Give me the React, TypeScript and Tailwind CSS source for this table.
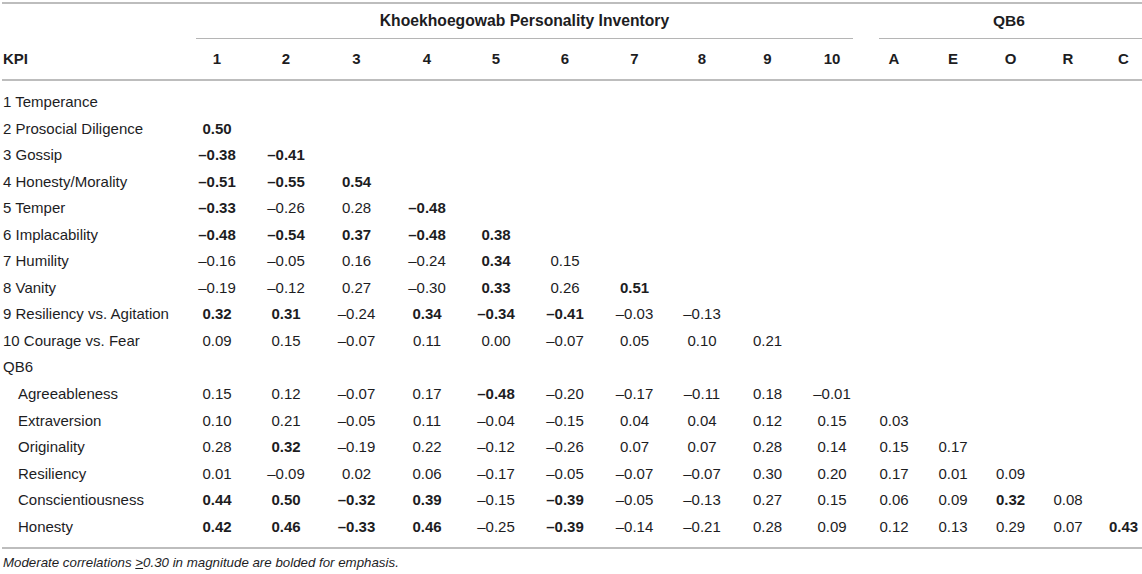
import React from "react";

// "*" prefix = bolded correlation
const rows: { label: string; sub?: boolean; values: string[] }[] = [
  { label: "1 Temperance", values: [] },
  { label: "2 Prosocial Diligence", values: ["*0.50"] },
  { label: "3 Gossip", values: ["*–0.38", "*–0.41"] },
  { label: "4 Honesty/Morality", values: ["*–0.51", "*–0.55", "*0.54"] },
  { label: "5 Temper", values: ["*–0.33", "–0.26", "0.28", "*–0.48"] },
  { label: "6 Implacability", values: ["*–0.48", "*–0.54", "*0.37", "*–0.48", "*0.38"] },
  { label: "7 Humility", values: ["–0.16", "–0.05", "0.16", "–0.24", "*0.34", "0.15"] },
  { label: "8 Vanity", values: ["–0.19", "–0.12", "0.27", "–0.30", "*0.33", "0.26", "*0.51"] },
  {
    label: "9 Resiliency vs. Agitation",
    values: ["*0.32", "*0.31", "–0.24", "*0.34", "*–0.34", "*–0.41", "–0.03", "–0.13"],
  },
  {
    label: "10 Courage vs. Fear",
    values: ["0.09", "0.15", "–0.07", "0.11", "0.00", "–0.07", "0.05", "0.10", "0.21"],
  },
  { label: "QB6", values: [] },
  {
    label: "Agreeableness",
    sub: true,
    values: ["0.15", "0.12", "–0.07", "0.17", "*–0.48", "–0.20", "–0.17", "–0.11", "0.18", "–0.01"],
  },
  {
    label: "Extraversion",
    sub: true,
    values: ["0.10", "0.21", "–0.05", "0.11", "–0.04", "–0.15", "0.04", "0.04", "0.12", "0.15", "0.03"],
  },
  {
    label: "Originality",
    sub: true,
    values: ["0.28", "*0.32", "–0.19", "0.22", "–0.12", "–0.26", "0.07", "0.07", "0.28", "0.14", "0.15", "0.17"],
  },
  {
    label: "Resiliency",
    sub: true,
    values: ["0.01", "–0.09", "0.02", "0.06", "–0.17", "–0.05", "–0.07", "–0.07", "0.30", "0.20", "0.17", "0.01", "0.09"],
  },
  {
    label: "Conscientiousness",
    sub: true,
    values: ["*0.44", "*0.50", "*–0.32", "*0.39", "–0.15", "*–0.39", "–0.05", "–0.13", "0.27", "0.15", "0.06", "0.09", "*0.32", "0.08"],
  },
  {
    label: "Honesty",
    sub: true,
    values: ["*0.42", "*0.46", "*–0.33", "*0.46", "–0.25", "*–0.39", "–0.14", "–0.21", "0.28", "0.09", "0.12", "0.13", "0.29", "0.07", "*0.43"],
  },
];

const heads = ["1", "2", "3", "4", "5", "6", "7", "8", "9", "10", "A", "E", "O", "R", "C"];

const cols =
  "grid grid-cols-[181px_68px_70px_71px_70px_68px_70px_69px_66px_65px_64px_60px_58px_57px_58px_45px]";

export default function App() {
  return (
    <div
      className="w-[1142px] h-[574px] bg-white text-[#1d1d1f] text-[15px] overflow-hidden"
      style={{ fontFamily: '"Liberation Sans", Arial, Helvetica, sans-serif' }}
    >
      <div className="ml-[2px] pt-[2px]">
        <div className="border-t-2 border-[#bdbdbd]" />

        {/* group header */}
        <div className={`${cols} h-[35px]`}>
          <div />
          <div className="col-span-10 flex flex-col">
            <div className="flex-1 flex items-center justify-center font-bold text-[15.7px] pl-[2px]">
              Khoekhoegowab Personality Inventory
            </div>
            <div className="ml-[13px] mr-[11px] border-b border-[#b5b5b5]" />
          </div>
          <div className="col-span-5 flex flex-col">
            <div className="flex-1 flex items-center justify-center font-bold text-[15.5px] pl-[12px]">QB6</div>
            <div className="ml-[15px] border-b border-[#b5b5b5]" />
          </div>
        </div>

        {/* column header */}
        <div className={`${cols} h-[40px] items-center font-bold`}>
          <div className="pl-[1px]">KPI</div>
          {heads.map((h, i) => (
            <div key={h} className={`text-center ${i === 14 ? "pl-[8px]" : ""}`}>
              {h}
            </div>
          ))}
        </div>
        <div className="border-t-2 border-[#bdbdbd]" />

        {/* body */}
        <div className="pt-[8px] pb-[7px]">
          {rows.map((r) => (
            <div key={r.label} className={`${cols} h-[26.55px] items-center`}>
              <div className={r.sub ? "pl-[16px]" : "pl-[1px]"}>{r.label}</div>
              {r.values.map((v, i) => {
                const bold = v.startsWith("*");
                return (
                  <div
                    key={i}
                    className={`text-center ${bold ? "font-bold" : ""} ${i === 14 ? "pl-[8px]" : ""}`}
                  >
                    {bold ? v.slice(1) : v}
                  </div>
                );
              })}
            </div>
          ))}
        </div>
        <div className="border-t-2 border-[#bdbdbd]" />

        <div className="pt-[4px] pl-[1px] italic text-[13.3px]">
          Moderate correlations <span className="underline">&gt;</span>0.30 in magnitude are bolded for
          emphasis.
        </div>
      </div>
    </div>
  );
}
